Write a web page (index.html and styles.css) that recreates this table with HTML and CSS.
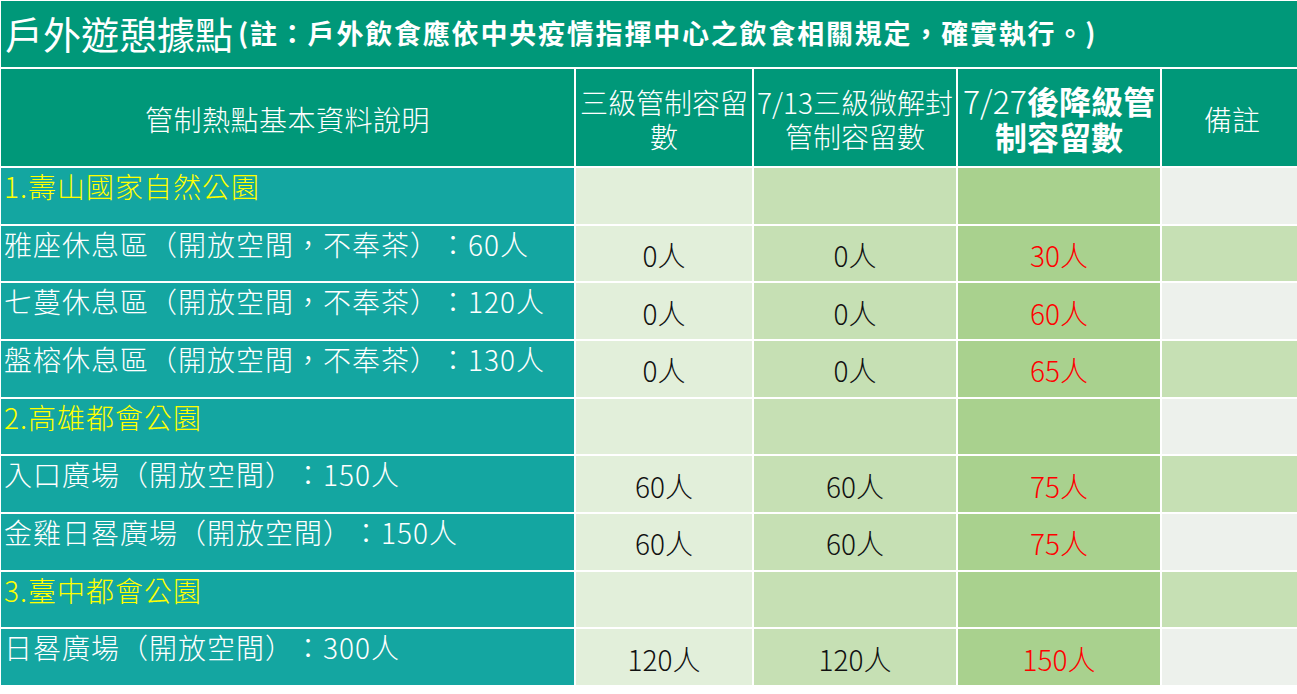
FILE: index.html
```html
<!DOCTYPE html>
<html lang="zh-Hant">
<head>
<meta charset="utf-8">
<title>戶外遊憩據點</title>
<link rel="stylesheet" href="styles.css">
</head>
<body>
<div class="sheet">
  <div class="title"><span class="title-main">戶外遊憩據點</span><span class="title-note">(註：戶外飲食應依中央疫情指揮中心之飲食相關規定，確實執行。)</span></div>

  <div class="hd hd-desc"><div>管制熱點基本資料說明</div></div>
  <div class="hd"><div>三級管制容留<br>數</div></div>
  <div class="hd"><div>7/13三級微解封<br>管制容留數</div></div>
  <div class="hd hd-bold"><div><span class="thin">7/27</span>後降級管<br>制容留數</div></div>
  <div class="hd"><div>備註</div></div>

  <div class="name group">1.壽山國家自然公園</div>
  <div class="c2"></div><div class="c3"></div><div class="c4"></div><div class="c5 light"></div>

  <div class="name">雅座休息區（開放空間，不奉茶）：60人</div>
  <div class="c2">0人</div><div class="c3">0人</div><div class="c4">30人</div><div class="c5"></div>

  <div class="name">七蔓休息區（開放空間，不奉茶）：120人</div>
  <div class="c2">0人</div><div class="c3">0人</div><div class="c4">60人</div><div class="c5 light"></div>

  <div class="name">盤榕休息區（開放空間，不奉茶）：130人</div>
  <div class="c2">0人</div><div class="c3">0人</div><div class="c4">65人</div><div class="c5"></div>

  <div class="name group">2.高雄都會公園</div>
  <div class="c2"></div><div class="c3"></div><div class="c4"></div><div class="c5 light"></div>

  <div class="name">入口廣場（開放空間）：150人</div>
  <div class="c2">60人</div><div class="c3">60人</div><div class="c4">75人</div><div class="c5"></div>

  <div class="name">金雞日晷廣場（開放空間）：150人</div>
  <div class="c2">60人</div><div class="c3">60人</div><div class="c4">75人</div><div class="c5 light"></div>

  <div class="name group">3.臺中都會公園</div>
  <div class="c2"></div><div class="c3"></div><div class="c4"></div><div class="c5"></div>

  <div class="name">日晷廣場（開放空間）：300人</div>
  <div class="c2">120人</div><div class="c3">120人</div><div class="c4">150人</div><div class="c5 light"></div>
</div>
</body>
</html>
```

FILE: styles.css
```css
html, body {
  margin: 0;
  padding: 0;
  background: #ffffff;
  overflow: hidden;
}

.sheet {
  display: grid;
  grid-template-columns: 573px 176px 202px 202px 140px;
  grid-template-rows: 66px 97px repeat(9, 55.67px);
  gap: 2px;
  padding: 1px 0 0 1px;
  width: max-content;
  font-family: "Noto Sans CJK TC", "Noto Sans CJK SC", sans-serif;
  font-weight: 300;
  color: #111111;
  text-spacing-trim: space-all;
}

.title {
  grid-column: 1 / -1;
  background: #009879;
  color: #ffffff;
  display: flex;
  align-items: center;
  padding: 0 0 3px 4px;
  white-space: nowrap;
}

.title-main {
  font-size: 38px;
  font-weight: 400;
}

.title-note {
  font-size: 27px;
  font-weight: 700;
  margin-left: 5px;
  letter-spacing: 1.8px;
}

.hd {
  background: #009879;
  color: #ffffff;
  font-size: 28px;
  line-height: 34px;
  display: flex;
  align-items: center;
  justify-content: center;
  text-align: center;
  padding-top: 2px;
  white-space: nowrap;
}

.hd-desc {
  letter-spacing: 0.5px;
}

.hd-bold {
  font-weight: 700;
  font-size: 32px;
  line-height: 36px;
  padding-top: 0;
}

.hd-bold .thin {
  font-weight: 300;
}

.name {
  background: #14a6a1;
  color: #ffffff;
  font-size: 28px;
  line-height: 36px;
  letter-spacing: 1px;
  padding: 0 0 0 3px;
  white-space: nowrap;
}

.name.group {
  color: #ffff00;
}

.c2, .c3, .c4, .c5 {
  font-size: 28px;
  display: flex;
  align-items: center;
  justify-content: center;
  padding-top: 3px;
}

.c2 { background: #e2efda; }
.c3 { background: #c6e0b4; }
.c4 { background: #a9d18e; color: #ff0000; }
.c5 { background: #c6e0b4; }
.c5.light { background: #edf1ec; }
```
